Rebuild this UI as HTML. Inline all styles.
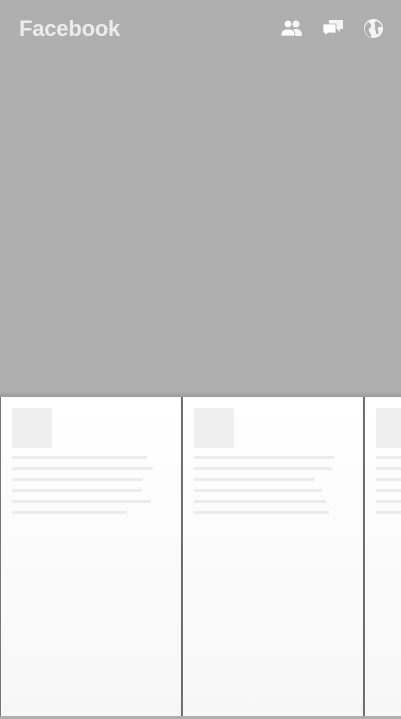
<!DOCTYPE html>
<html><head><style>
body{margin:0;width:401px;height:719px;background:#afafaf;position:relative;overflow:hidden;font-family:"Liberation Sans",sans-serif}
.t{position:absolute;left:19px;top:16px;font-size:22px;font-weight:bold;color:#ececec;letter-spacing:-0.2px}
.card{position:absolute;top:397px;height:319px;width:180px;background:linear-gradient(#fff,#f7f7f7);border-left:1px solid #777;border-right:1px solid #666}
.av{position:absolute;left:11px;top:11px;width:40px;height:40px;background:#efefef}
.l{position:absolute;left:11px;height:3px;background:#ececec}
.sh{position:absolute;left:0;top:391px;width:401px;height:6px;background:linear-gradient(#afafaf,#9c9c9c)}
</style></head><body>
<div class="t">Facebook</div>
<svg style="position:absolute;left:281px;top:19px" width="22" height="18" viewBox="0 0 22 18">
<circle cx="15" cy="5" r="3.6" fill="#f4f4f4"/><path d="M9 17c0-5 2-7 6-7s6 2 6 7z" fill="#f4f4f4"/>
<circle cx="7" cy="5" r="3.8" fill="#fff" stroke="#afafaf" stroke-width="0.8"/><path d="M0 17c0-5 2-7 7-7s7 2 7 7z" fill="#fff" stroke="#afafaf" stroke-width="0.8"/>
</svg>
<svg style="position:absolute;left:322px;top:19px" width="22" height="19" viewBox="0 0 22 19">
<path d="M7 1h14v9h-3v3l-3-3H7z" fill="#f4f4f4"/><path d="M1 5h13v9H6l-3 3v-3H1z" fill="#fff" stroke="#afafaf" stroke-width="0.8"/>
</svg>
<svg style="position:absolute;left:363px;top:18px" width="21" height="21" viewBox="0 0 21 21">
<circle cx="10.5" cy="10.5" r="9.5" fill="#f4f4f4"/>
<path d="M5 4c2 1 4 3 3 5s-3 1-2 4 3 3 2 6C4 18 1 14 2 9c1-2 2-4 3-5zM13 3c3 1 5 3 6 6-2 0-3-1-4 1s2 4 0 6c-1 1-2 0-2-2s-2-3-1-5-2-3 1-6z" fill="#afafaf"/>
</svg>
<div class="sh"></div>
<div class="card" style="left:0"><div class="av"></div>
<div class="l" style="top:59px;width:135px"></div><div class="l" style="top:70px;width:141px"></div><div class="l" style="top:81px;width:131px"></div><div class="l" style="top:92px;width:130px"></div><div class="l" style="top:103px;width:139px"></div><div class="l" style="top:114px;width:115px"></div></div>
<div class="card" style="left:182px"><div class="av"></div>
<div class="l" style="top:59px;width:140px"></div><div class="l" style="top:70px;width:138px"></div><div class="l" style="top:81px;width:121px"></div><div class="l" style="top:92px;width:128px"></div><div class="l" style="top:103px;width:132px"></div><div class="l" style="top:114px;width:135px"></div></div>
<div class="card" style="left:364px"><div class="av"></div>
<div class="l" style="top:59px;width:140px"></div><div class="l" style="top:70px;width:140px"></div><div class="l" style="top:81px;width:140px"></div><div class="l" style="top:92px;width:140px"></div><div class="l" style="top:103px;width:140px"></div><div class="l" style="top:114px;width:140px"></div></div>
</body></html>
